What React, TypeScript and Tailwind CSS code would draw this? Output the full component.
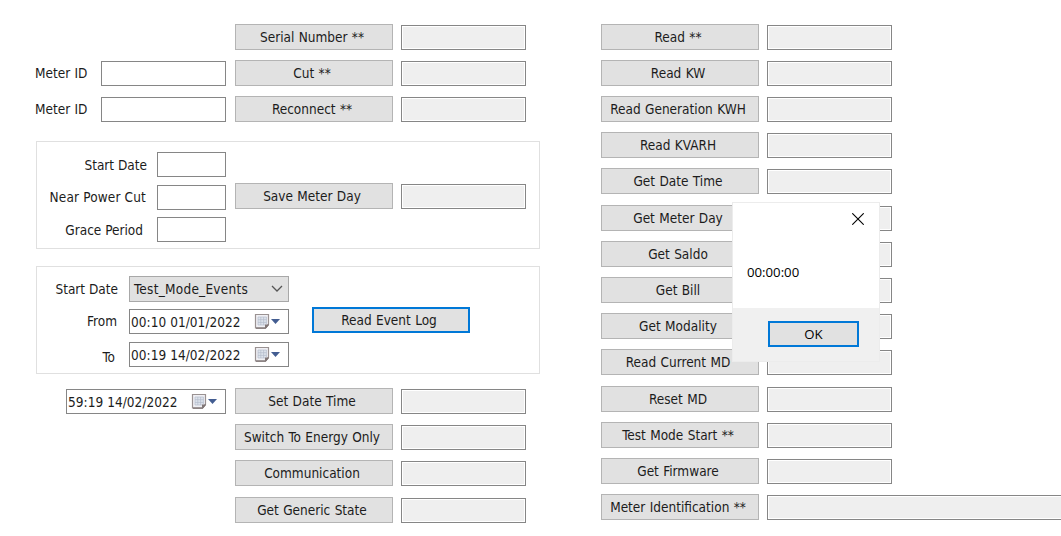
import type { ReactNode } from "react";

function Btn({ children, focus = false }: { children: ReactNode; focus?: boolean }) {
  return (
    <button
      className={
        "h-[26px] w-[158px] shrink-0 whitespace-nowrap bg-[#e1e1e1] pr-[4px] text-center [word-spacing:0.5px] " +
        (focus ? "border-2 border-[#0078d7] leading-[23px]" : "border border-[#b4b4b4] leading-[24px]")
      }
    >
      {children}
    </button>
  );
}

function Field({ size = "w-[125px]", readOnly = false }: { size?: string; readOnly?: boolean }) {
  return (
    <div className={"h-[25px] shrink-0 border border-[#868686] p-px " + size}>
      <div className={"h-full w-full " + (readOnly ? "bg-[#efefef]" : "bg-white")} />
    </div>
  );
}

function DateField({ children }: { children: string }) {
  return (
    <div className="flex h-[25px] w-[160px] shrink-0 items-center border border-[#868686] bg-white pl-[1px]">
      <span className="w-[123px] whitespace-nowrap tracking-[0.05px]">{children}</span>
      <svg width="27" height="17" viewBox="0 0 27 17" className="shrink-0">
        <path d="M1.500 1.500h13v10l-3 3.500h-10z" fill="#f0f0f4" stroke="#9a9292" strokeWidth="1.2" />
        <path d="M2 15.200h9.500l3-3.500" fill="none" stroke="#786e6e" strokeWidth="1.2" />
        <path d="M4 4h8.500v8H4z" fill="#dde3ec" />
        <path d="M4 4h8.500M4 6.700h8.500M4 9.400h8.500M4 12h7M4 4v8M6.800 4v8M9.600 4v8M12.400 4v7" stroke="#b4bccb" strokeWidth="0.7" />
        <path d="M11 15v-3.500h3.500z" fill="#817777" />
        <path d="M17 6h9l-4.500 5z" fill="#435d91" />
      </svg>
    </div>
  );
}

const readings = [
  "Read **", "Read KW", "Read Generation KWH", "Read KVARH", "Get Date Time",
  "Get Meter Day", "Get Saldo", "Get Bill", "Get Modality", "Read Current MD",
  "Reset MD", "Test Mode Start **", "Get Firmware", "Meter Identification **",
];

const topRows = ["Serial Number **", "Cut **", "Reconnect **"];
const bottomRows = ["Set Date Time", "Switch To Energy Only", "Communication", "Get Generic State"];

export default function App() {
  return (
    <main className="relative flex h-[536px] w-[1061px] overflow-hidden bg-white font-['DejaVu_Sans_Condensed','DejaVu_Sans',sans-serif] text-[13.5px] leading-[20px] text-[#1c1c1c] [font-stretch:condensed]">
      <section className="flex w-[601px] shrink-0 flex-col pt-[23.5px]">
        {topRows.map((name, i) => (
          <div key={name} className="flex h-[36.2px] items-start">
            <div className="flex w-[235px] shrink-0 items-center pl-[35px] pt-px">
              {i > 0 && (
                <>
                  <label className="w-[66px] [word-spacing:0.5px]">Meter ID</label>
                  <Field />
                </>
              )}
            </div>
            <Btn>{name}</Btn>
            <div className="pl-2 pt-px"><Field readOnly /></div>
          </div>
        ))}

        <div className="ml-9 mt-[9px] flex h-[108px] w-[504px] shrink-0 border border-[#e0e0e0] pt-[10px]">
          <div className="flex w-[189px] flex-col gap-[7.5px]">
            <div className="flex items-center justify-end gap-[10px]"><label>Start Date</label><Field size="w-[69px]" /></div>
            <div className="flex items-center justify-end gap-[11px]"><label className="tracking-[0.15px]">Near Power Cut</label><Field size="w-[69px]" /></div>
            <div className="flex items-center justify-end gap-[14px]"><label>Grace Period</label><Field size="w-[69px]" /></div>
          </div>
          <div className="flex items-start pl-[9px] pt-[31px]">
            <Btn>Save Meter Day</Btn>
            <div className="pl-2 pt-px"><Field readOnly /></div>
          </div>
        </div>

        <div className="ml-9 mt-[17px] flex h-[108px] w-[504px] shrink-0 border border-[#e0e0e0] pt-[9px]">
          <div className="flex w-[252px] flex-col">
            <div className="flex h-[33px] items-start justify-end gap-[11px]">
              <label className="pt-[3px]">Start Date</label>
              <div className="flex h-[26px] w-[160px] items-center justify-between border border-[#a8a8a8] bg-[#e1e1e1] pl-1 pr-[5px]">
                <span className="tracking-[0.25px]">Test_Mode_Events</span>
                <svg width="12" height="8" viewBox="0 0 12 8"><path d="M1 1l5 5 5-5" fill="none" stroke="#555" strokeWidth="1.3" /></svg>
              </div>
            </div>
            <div className="flex h-[33px] items-start justify-end gap-[12px]">
              <label className="pt-[2px]">From</label>
              <DateField>00:10 01/01/2022</DateField>
            </div>
            <div className="flex items-start justify-end gap-[14px]">
              <label className="pt-[5px]">To</label>
              <DateField>00:19 14/02/2022</DateField>
            </div>
          </div>
          <div className="pl-[23px] pt-[31px]"><Btn focus>Read Event Log</Btn></div>
        </div>

        <div className="mt-[14px]">
          {bottomRows.map((name, i) => (
            <div key={name} className="flex h-[36.2px] items-start">
              <div className="w-[235px] shrink-0 pl-[66px] pt-px">{i === 0 && <DateField>59:19 14/02/2022</DateField>}</div>
              <Btn>{name}</Btn>
              <div className="pl-2 pt-px"><Field readOnly /></div>
            </div>
          ))}
        </div>
      </section>

      <section className="flex shrink-0 flex-col pt-[23.5px]">
        {readings.map((name, i) => (
          <div key={name} className="flex h-[36.23px] shrink-0 items-start">
            <Btn>{name}</Btn>
            <div className="pl-2 pt-px"><Field readOnly size={i === 13 ? "w-[310px]" : "w-[125px]"} /></div>
          </div>
        ))}
      </section>

      <div role="dialog" className="absolute left-[733px] top-[203px] flex h-[158px] w-[146px] flex-col bg-white font-['Open_Sans',sans-serif] text-[13.2px] text-black outline outline-1 outline-[#ececec] [font-stretch:normal]">
        <div className="flex justify-end pr-[15px] pt-[10px]">
          <svg width="12" height="12" viewBox="0 0 12 12"><path d="M.3.300l11.400 11.400M11.700.300L.3 11.700" stroke="#000" strokeWidth="1.1" /></svg>
        </div>
        <p className="pl-[14px] pt-[38px] leading-[18px]">00:00:00</p>
        <div className="mt-auto flex h-[53px] items-start bg-[#f0f0f0] pl-[35px] pt-[13px]">
          <button className="h-[26px] w-[91px] border-2 border-[#0078d7] bg-[#e1e1e1] leading-[22px]">OK</button>
        </div>
      </div>
    </main>
  );
}
